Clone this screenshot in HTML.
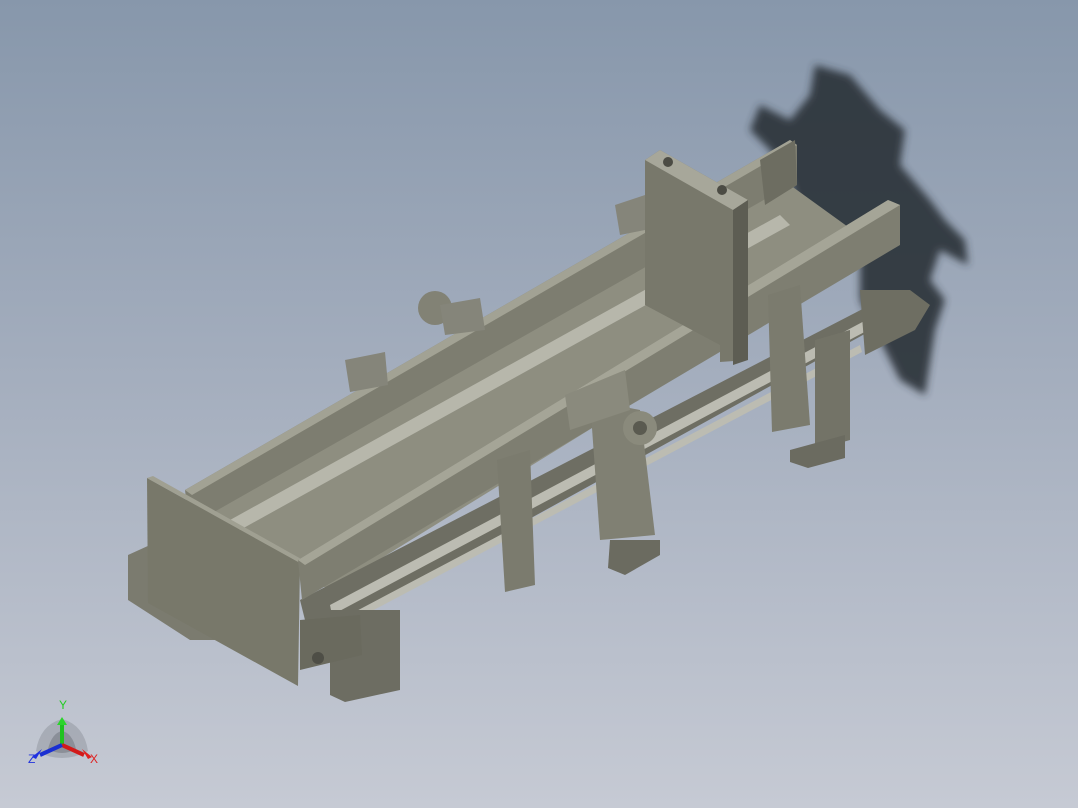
<!DOCTYPE html>
<html><head><meta charset="utf-8"><style>
html,body{margin:0;padding:0;width:1078px;height:808px;overflow:hidden}
body{background:linear-gradient(180deg,#8797ab 0%,#a3adbd 45%,#c6cad4 100%)}
svg{position:absolute;left:0;top:0}
text{font-family:"Liberation Sans",sans-serif;font-size:12px}
</style></head><body>
<svg width="1078" height="808" viewBox="0 0 1078 808">
<defs><filter id="b"><feGaussianBlur stdDeviation="4"/></filter></defs>
<!-- shadow -->
<path d="M815,65 L850,75 L880,110 L905,130 L900,165 L930,200 L945,220 L965,240 L968,265 L940,250 L930,280 L945,300 L935,330 L925,395 L900,380 L880,340 L860,300 L860,260 L840,240 L820,235 L800,215 L790,180 L770,150 L750,130 L760,105 L790,120 L810,95 Z" fill="#2c3038" opacity="0.9" filter="url(#b)"/>
<!-- back rail -->
<polygon points="185,490 790,140 797,145 797,185 190,530" fill="#7d7d70"/>
<polygon points="185,490 790,140 797,145 192,495" fill="#a2a294"/>
<!-- belt surface -->
<polygon points="200,520 790,185 880,250 330,590" fill="#8e8e80"/>
<polygon points="230,520 780,215 790,225 240,530" fill="#b7b7ab"/>
<!-- bottom extrusions -->
<polygon points="300,600 880,300 890,320 310,640" fill="#6e6e63"/>
<polygon points="330,605 870,318 872,328 332,615" fill="#bcbcb2"/>
<polygon points="330,625 860,345 862,352 332,632" fill="#bcbcb2"/>
<!-- motor box -->
<polygon points="330,610 400,610 400,690 345,702 330,695" fill="#6d6d62"/>
<polygon points="128,555 150,545 175,560 215,640 190,640 128,600" fill="#7b7b6f"/>
<!-- front end plate -->
<polygon points="147,478 300,563 298,686 148,603" fill="#78786a"/>
<polygon points="147,478 153,476 303,560 300,563" fill="#a0a092"/>
<polygon points="300,620 360,615 362,655 300,670" fill="#6a6a5e"/>
<circle cx="318" cy="658" r="6" fill="#4e4e46"/>
<!-- front rail -->
<polygon points="298,560 888,200 900,205 900,245 302,600" fill="#7e7e71"/>
<polygon points="298,560 888,200 900,205 305,565" fill="#a5a597"/>
<!-- vertical block -->
<polygon points="645,160 660,150 748,200 748,360 720,362 720,345 645,305" fill="#78786b"/>
<polygon points="645,160 660,150 748,200 733,210" fill="#a7a79a"/>
<polygon points="733,210 748,200 748,360 733,365" fill="#5d5d53"/>
<circle cx="668" cy="162" r="5" fill="#4c4c44"/><circle cx="722" cy="190" r="5" fill="#4c4c44"/>
<!-- right end plate -->
<polygon points="760,160 795,140 797,185 765,205" fill="#6d6d61"/>
<polygon points="860,290 910,290 930,305 915,330 865,355" fill="#6e6e62"/>
<!-- brackets -->
<polygon points="497,460 530,450 535,585 505,592" fill="#7b7b6e"/>
<polygon points="590,400 640,410 655,535 600,540" fill="#808073"/>
<circle cx="640" cy="428" r="17" fill="#8a8a7c"/><circle cx="640" cy="428" r="7" fill="#5a5a50"/>
<polygon points="565,395 625,370 630,410 570,430" fill="#8a8a7d"/>
<polygon points="610,540 660,540 660,555 625,575 608,568" fill="#6b6b60"/>
<polygon points="768,295 800,285 810,425 772,432" fill="#7b7b6e"/>
<polygon points="815,340 850,330 850,440 815,450" fill="#737367"/>
<polygon points="790,450 845,435 845,458 808,468 790,462" fill="#6b6b60"/>
<circle cx="435" cy="308" r="17" fill="#828275"/>
<polygon points="440,305 480,298 485,330 445,335" fill="#85857a"/>
<polygon points="345,360 385,352 388,385 350,392" fill="#85857a"/>
<polygon points="615,205 645,195 645,230 620,235" fill="#85857a"/>
<!-- triad -->
<g transform="translate(62,745)">
<path d="M-26,6 Q-22,-20 0,-26 Q22,-20 26,6 Q0,20 -26,6Z" fill="#8a8e96" opacity="0.45"/>
<path d="M-14,4 Q-10,-12 0,-14 Q10,-12 14,4 Q0,12 -14,4Z" fill="#6e727a" opacity="0.5"/>
<line x1="0" y1="0" x2="0" y2="-22" stroke="#1fc21f" stroke-width="4"/><polygon points="-5,-20 5,-20 0,-28" fill="#2ad42a"/>
<line x1="0" y1="0" x2="22" y2="10" stroke="#d21a1a" stroke-width="4"/><polygon points="20,4 26,14 30,12" fill="#e02020"/>
<line x1="0" y1="0" x2="-22" y2="10" stroke="#1a2fd2" stroke-width="4"/><polygon points="-20,4 -26,14 -30,12" fill="#2030e0"/>
<text x="-3" y="-36" fill="#22cc22">Y</text>
<text x="28" y="18" fill="#dd2222">X</text>
<text x="-34" y="18" fill="#2233dd">Z</text>
</g>
</svg>
</body></html>
